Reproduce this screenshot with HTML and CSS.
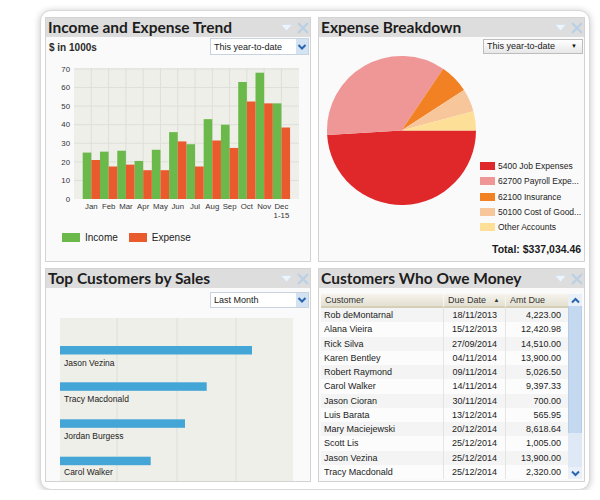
FILE: index.html
```html
<!DOCTYPE html>
<html>
<head>
<meta charset="utf-8">
<title>Dashboard</title>
<link rel="stylesheet" href="styles.css">
</head>
<body>
<div class="frame">

  <section class="panel p-trend">
    <header class="ph">
      <h2>Income and Expense Trend</h2>
      <svg class="tools" width="28" height="12" viewBox="0 0 28 12"><path class="tri" d="M0 2.5H11L5.5 9Z"/><path class="x" d="M17 1L27 11M27 1L17 11"/></svg>
    </header>
    <div class="tb">
      <span class="units">$ in 1000s</span>
      <div class="sel"><span>This year-to-date</span><span class="chev"><svg width="10" height="8" viewBox="0 0 10 8"><path d="M1.5 2L5 5.5L8.5 2"/></svg></span></div>
    </div>
    <svg class="chart trend" width="264" height="170" viewBox="0 0 264 170">
      <rect class="plot" x="28" y="13" width="225" height="131"/>
      <path class="grid" d="M28 14H253M28 32.57H253M28 51.14H253M28 69.71H253M28 88.29H253M28 106.86H253M28 125.43H253M45.34 13V144M62.62 13V144M79.9 13V144M97.18 13V144M114.46 13V144M131.74 13V144M149.02 13V144M166.3 13V144M183.58 13V144M200.86 13V144M218.14 13V144M235.42 13V144"/>
      <g class="inc">
        <rect x="36.7" y="97.57" width="8.64" height="46.43"/>
        <rect x="53.98" y="96.64" width="8.64" height="47.36"/>
        <rect x="71.26" y="95.71" width="8.64" height="48.29"/>
        <rect x="88.54" y="105.93" width="8.64" height="38.07"/>
        <rect x="105.82" y="94.79" width="8.64" height="49.21"/>
        <rect x="123.1" y="77.14" width="8.64" height="66.86"/>
        <rect x="140.38" y="89.21" width="8.64" height="54.79"/>
        <rect x="157.66" y="64.14" width="8.64" height="79.86"/>
        <rect x="174.94" y="69.71" width="8.64" height="74.29"/>
        <rect x="192.22" y="27" width="8.64" height="117"/>
        <rect x="209.5" y="17.71" width="8.64" height="126.29"/>
        <rect x="226.78" y="48.36" width="8.64" height="95.64"/>
      </g>
      <g class="exp">
        <rect x="45.34" y="105" width="8.64" height="39"/>
        <rect x="62.62" y="111.5" width="8.64" height="32.5"/>
        <rect x="79.9" y="109.64" width="8.64" height="34.36"/>
        <rect x="97.18" y="115.21" width="8.64" height="28.79"/>
        <rect x="114.46" y="115.21" width="8.64" height="28.79"/>
        <rect x="131.74" y="86.43" width="8.64" height="57.57"/>
        <rect x="149.02" y="111.5" width="8.64" height="32.5"/>
        <rect x="166.3" y="85.5" width="8.64" height="58.5"/>
        <rect x="183.58" y="92.93" width="8.64" height="51.07"/>
        <rect x="200.86" y="46.5" width="8.64" height="97.5"/>
        <rect x="218.14" y="48.36" width="8.64" height="95.64"/>
        <rect x="235.42" y="72.5" width="8.64" height="71.5"/>
      </g>
      <g class="ylab">
        <text x="24" y="146.7">0</text>
        <text x="24" y="128.1">10</text>
        <text x="24" y="109.6">20</text>
        <text x="24" y="91">30</text>
        <text x="24" y="72.4">40</text>
        <text x="24" y="53.8">50</text>
        <text x="24" y="35.3">60</text>
        <text x="24" y="16.7">70</text>
      </g>
      <g class="xlab">
        <text x="45.34" y="153.5">Jan</text>
        <text x="62.62" y="153.5">Feb</text>
        <text x="79.9" y="153.5">Mar</text>
        <text x="97.18" y="153.5">Apr</text>
        <text x="114.46" y="153.5">May</text>
        <text x="131.74" y="153.5">Jun</text>
        <text x="149.02" y="153.5">Jul</text>
        <text x="166.3" y="153.5">Aug</text>
        <text x="183.58" y="153.5">Sep</text>
        <text x="200.86" y="153.5">Oct</text>
        <text x="218.14" y="153.5">Nov</text>
        <text x="235.42" y="153.5">Dec</text>
        <text x="235.42" y="163">1-15</text>
      </g>
    </svg>
    <div class="legend">
      <span class="sw g"></span><span>Income</span>
      <span class="sw r"></span><span>Expense</span>
    </div>
  </section>

  <section class="panel p-pie">
    <header class="ph">
      <h2>Expense Breakdown</h2>
      <svg class="tools" width="28" height="12" viewBox="0 0 28 12"><path class="tri" d="M0 2.5H11L5.5 9Z"/><path class="x" d="M17 1L27 11M27 1L17 11"/></svg>
    </header>
    <div class="tb tb-end">
      <div class="sel sel-plain"><span>This year-to-date</span><span class="arr">&#9660;</span></div>
    </div>
    <div class="pie-wrap">
      <svg class="pie" width="161" height="158" viewBox="0 0 161 158">
        <path class="s1" d="M82.5 76.5L8.14 81.05A74.5 74.5 0 0 0 157 76.5Z"/>
        <path class="s2" d="M82.5 76.5L124.16 14.74A74.5 74.5 0 0 0 8.14 81.05Z"/>
        <path class="s3" d="M82.5 76.5L144.98 35.93A74.5 74.5 0 0 0 124.16 14.74Z"/>
        <path class="s4" d="M82.5 76.5L154.46 57.22A74.5 74.5 0 0 0 144.98 35.93Z"/>
        <path class="s5" d="M82.5 76.5L157 76.5A74.5 74.5 0 0 0 154.46 57.22Z"/>
      </svg>
      <div class="pie-legend">
        <ul>
          <li><span class="sw s1"></span>5400 Job Expenses</li>
          <li><span class="sw s2"></span>62700 Payroll Expe...</li>
          <li><span class="sw s3"></span>62100 Insurance</li>
          <li><span class="sw s4"></span>50100 Cost of Good...</li>
          <li><span class="sw s5"></span>Other Accounts</li>
        </ul>
        <div class="total">Total: $337,034.46</div>
      </div>
    </div>
  </section>

  <section class="panel p-top">
    <header class="ph">
      <h2>Top Customers by Sales</h2>
      <svg class="tools" width="28" height="12" viewBox="0 0 28 12"><path class="tri" d="M0 2.5H11L5.5 9Z"/><path class="x" d="M17 1L27 11M27 1L17 11"/></svg>
    </header>
    <div class="tb tb-end">
      <div class="sel sel-sm"><span>Last Month</span><span class="chev"><svg width="10" height="8" viewBox="0 0 10 8"><path d="M1.5 2L5 5.5L8.5 2"/></svg></span></div>
    </div>
    <svg class="chart bars" width="264" height="173" viewBox="0 0 264 173">
      <rect class="plot" x="14" y="10" width="233" height="163"/>
      <path class="grid" d="M71 10V173M131 10V173M190 10V173"/>
      <rect class="bar" x="14" y="38" width="192" height="8.5"/>
      <text x="18" y="58">Jason Vezina</text>
      <rect class="bar" x="14" y="74.3" width="146.7" height="8.5"/>
      <text x="18" y="94.3">Tracy Macdonald</text>
      <rect class="bar" x="14" y="111.3" width="125" height="8.5"/>
      <text x="18" y="131.3">Jordan Burgess</text>
      <rect class="bar" x="14" y="148.7" width="90.7" height="8.5"/>
      <text x="18" y="167.3">Carol Walker</text>
    </svg>
  </section>

  <section class="panel p-owe">
    <header class="ph">
      <h2>Customers Who Owe Money</h2>
      <svg class="tools" width="28" height="12" viewBox="0 0 28 12"><path class="tri" d="M0 2.5H11L5.5 9Z"/><path class="x" d="M17 1L27 11M27 1L17 11"/></svg>
    </header>
    <div class="owe-wrap">
      <table class="owe">
        <colgroup><col class="c1"><col class="c2"><col class="c3"></colgroup>
        <thead>
          <tr><th>Customer</th><th>Due Date <span class="sort">&#9650;</span></th><th>Amt Due</th></tr>
        </thead>
        <tbody>
          <tr><td>Rob deMontarnal</td><td>18/11/2013</td><td>4,223.00</td></tr>
          <tr><td>Alana Vieira</td><td>15/12/2013</td><td>12,420.98</td></tr>
          <tr><td>Rick Silva</td><td>27/09/2014</td><td>14,510.00</td></tr>
          <tr><td>Karen Bentley</td><td>04/11/2014</td><td>13,900.00</td></tr>
          <tr><td>Robert Raymond</td><td>09/11/2014</td><td>5,026.50</td></tr>
          <tr><td>Carol Walker</td><td>14/11/2014</td><td>9,397.33</td></tr>
          <tr><td>Jason Cioran</td><td>30/11/2014</td><td>700.00</td></tr>
          <tr><td>Luis Barata</td><td>13/12/2014</td><td>565.95</td></tr>
          <tr><td>Mary Maciejewski</td><td>20/12/2014</td><td>8,618.64</td></tr>
          <tr><td>Scott Lis</td><td>25/12/2014</td><td>1,005.00</td></tr>
          <tr><td>Jason Vezina</td><td>25/12/2014</td><td>13,900.00</td></tr>
          <tr><td>Tracy Macdonald</td><td>25/12/2014</td><td>2,320.00</td></tr>
        </tbody>
      </table>
      <div class="scroll">
        <span class="sb-btn"><svg width="9" height="7" viewBox="0 0 9 7"><path d="M1 5.5L4.5 2L8 5.5"/></svg></span>
        <span class="sb-thumb"></span>
        <span class="sb-rest"></span>
        <span class="sb-btn"><svg width="9" height="7" viewBox="0 0 9 7"><path d="M1 1.5L4.5 5L8 1.5"/></svg></span>
      </div>
    </div>
  </section>

</div>
</body>
</html>
```
FILE: styles.css
```css
* { box-sizing: border-box; }
html, body { margin: 0; background: #fff; }
body {
  padding: 10px 0 0 40px;
  font-family: "Liberation Sans", Arial, sans-serif;
  color: #222;
}
.frame {
  width: 550px;
  height: 480px;
  border: 1px solid #d9d9d9;
  border-radius: 11px;
  background: #fff;
  box-shadow: 0 1px 7px rgba(0, 0, 0, 0.24);
  padding: 6px 4px 7px 4px;
  display: grid;
  grid-template-columns: 266px 267px;
  grid-template-rows: 245px 214px;
  column-gap: 7px;
  row-gap: 6px;
}
.panel {
  border: 1px solid #d3d3d3;
  background: #fafafa;
  display: flex;
  flex-direction: column;
  overflow: hidden;
  min-height: 0;
}
.ph {
  flex: none;
  height: 19px;
  background: #dddddd;
  display: flex;
  align-items: center;
  justify-content: space-between;
  padding: 0 1px 0 2px;
}
.ph h2 {
  margin: 0;
  font: 700 15.5px/19px Lato, "Open Sans", sans-serif;
  color: #1d1d1d;
  white-space: nowrap;
}
.tools { display: block; }
.tools .tri { fill: #eef4fa; stroke: #d2e1ef; stroke-width: 0.8; stroke-linejoin: round; }
.tools .x { stroke: #bad0e6; stroke-width: 2.3; fill: none; }

.tb {
  flex: none;
  display: flex;
  align-items: center;
  justify-content: space-between;
  padding: 1px 1px 0 3px;
  height: 18px;
}
.tb-end { justify-content: flex-end; }
.units { font-size: 10px; font-weight: 700; color: #2a2a2a; padding-top: 2px; }

.sel {
  display: flex;
  align-items: center;
  justify-content: space-between;
  width: 99px;
  height: 17px;
  border: 1px solid #c7d3df;
  background: #fff;
  font-size: 9px;
  color: #222;
  padding-left: 3px;
}
.chev {
  width: 12px;
  height: 15px;
  background: #d3e3f4;
  display: flex;
  align-items: center;
  justify-content: center;
}
.chev path { stroke: #2a66b0; stroke-width: 2; fill: none; }
.p-pie .tb { height: 17px; }
.sel-plain {
  width: 100px;
  height: 15px;
  border: 1px solid #bdbdbd;
  background: linear-gradient(#ffffff, #e7e7e7);
  padding: 0 5px 0 3px;
}
.arr { font-size: 6px; color: #111; }
.p-top .tb { height: 20px; padding-top: 4px; }
.sel-sm { height: 16px; }
.sel-sm .chev { height: 14px; }

.chart { display: block; flex: none; }
.chart .plot { fill: #efefe9; }
.chart .grid { stroke: #dedfd8; stroke-width: 1; fill: none; }
.trend .inc rect { fill: #6cb94b; }
.trend .exp rect { fill: #e95a2c; }
.trend text { font-family: "Liberation Sans", Arial, sans-serif; font-size: 7.8px; fill: #333; }
.trend .ylab text { text-anchor: end; }
.trend .xlab text { text-anchor: middle; }

.legend {
  flex: none;
  display: flex;
  align-items: center;
  height: 25px;
  padding-left: 16px;
  font-size: 10px;
  color: #222;
}
.legend .sw { width: 18px; height: 9px; margin-right: 5px; }
.legend .sw.g { background: #6cb94b; }
.legend .sw.r { background: #e95a2c; margin-left: 11px; }

.pie-wrap { flex: 1; display: flex; min-height: 0; }
.pie { flex: none; display: block; }
.s1 { fill: #e0282a; background: #e0282a; }
.s2 { fill: #ee9796; background: #ee9796; }
.s3 { fill: #f28123; background: #f28123; }
.s4 { fill: #f8c69b; background: #f8c69b; }
.s5 { fill: #fddf98; background: #fddf98; }
.pie-legend {
  flex: 1;
  display: flex;
  flex-direction: column;
  justify-content: flex-end;
  padding: 0 3px 5px 0;
}
.pie-legend ul { list-style: none; margin: 0; padding: 0; }
.pie-legend li {
  display: flex;
  align-items: center;
  height: 15.3px;
  font-size: 8.5px;
  white-space: nowrap;
  color: #222;
}
.pie-legend .sw { width: 15px; height: 8px; margin-right: 3px; flex: none; }
.total {
  margin-top: 7px;
  text-align: right;
  font-weight: 700;
  font-size: 10.5px;
  line-height: 14px;
  color: #1a1a1a;
}

.bars .bar { fill: #43a6d6; }
.bars text { font-family: "Liberation Sans", Arial, sans-serif; font-size: 8.5px; fill: #222; }

.owe-wrap {
  flex: 1;
  display: flex;
  align-items: flex-start;
  padding: 6px 2px 0 2px;
  min-height: 0;
}
.owe {
  width: 247px;
  border-collapse: separate;
  border-spacing: 0;
  table-layout: fixed;
  font-size: 9px;
  color: #222;
}
.owe .c1 { width: 122px; }
.owe .c2 { width: 62px; }
.owe .c3 { width: 63px; }
.owe th {
  height: 14px;
  font-weight: 400;
  text-align: left;
  padding: 0 0 0 4px;
  color: #333;
  background: linear-gradient(#f5f3ec, #e3dfd1);
  border-bottom: 2px solid #d5cfb8;
  border-left: 1px solid #f7f6f1;
}
.owe th:first-child { border-left: none; }
.sort { font-size: 6px; margin-left: 5px; vertical-align: 1px; }
.owe td {
  height: 14.25px;
  padding: 0;
  white-space: nowrap;
  border-left: 1px solid #e4e4e4;
}
.owe td:first-child { border-left: none; padding-left: 3px; }
.owe td:nth-child(2) { text-align: right; padding-right: 8px; }
.owe td:nth-child(3) { text-align: right; padding-right: 7px; }
.owe tbody tr:nth-child(odd) td { background: #f4f4f4; }
.owe tbody tr:nth-child(even) td { background: #fcfcfc; }

.scroll {
  flex: none;
  width: 14px;
  height: 185px;
  display: flex;
  flex-direction: column;
  background: #dfe9f5;
}
.sb-btn {
  flex: none;
  height: 12px;
  display: flex;
  align-items: center;
  justify-content: center;
  background: #e9f0f8;
}
.sb-btn path { stroke: #2a66b0; stroke-width: 2; fill: none; }
.sb-thumb {
  flex: none;
  height: 127px;
  background: #c4d9f0;
  border-left: 1px solid #b6cde8;
  border-right: 1px solid #b6cde8;
}
.sb-rest { flex: 1; }
```
